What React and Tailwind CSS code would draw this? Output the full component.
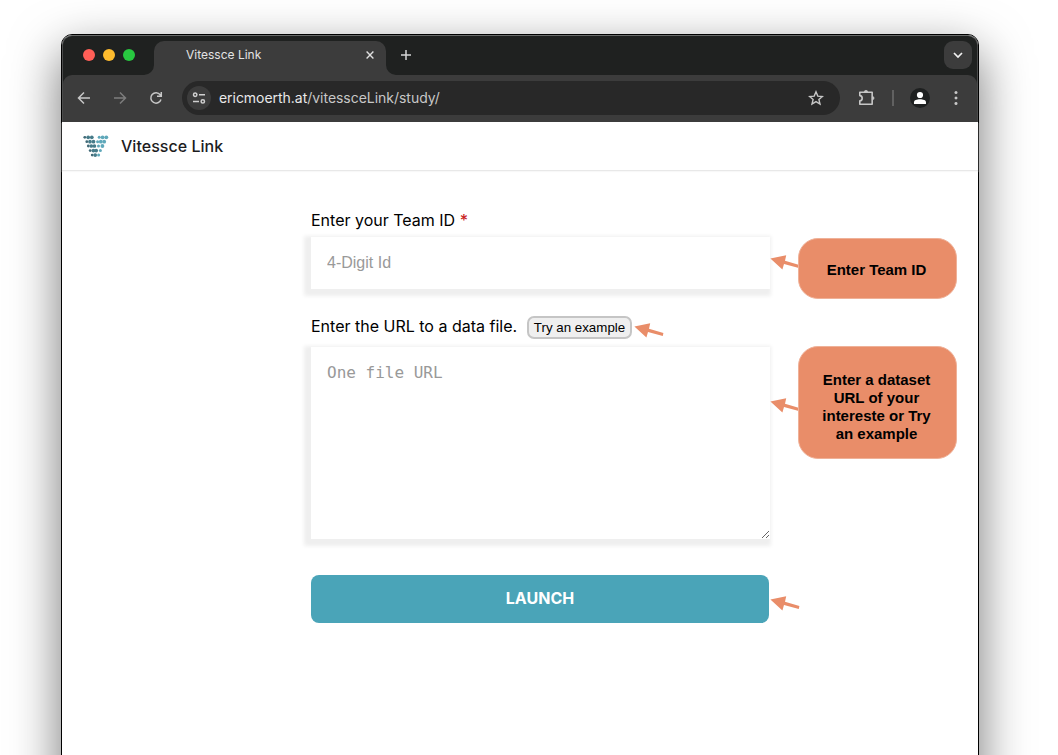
import React from "react";

const ROWS = [
  { y: 13.8, dark: [12.8, 16.2, 19.8], light: [27.2, 30.6, 34.3] },
  { y: 18.2, dark: [14.8, 18, 21.5], light: [25.6, 28.8, 32.2] },
  { y: 22.5, dark: [16.3, 19.3, 22.4], light: [26.5, 30.4] },
  { y: 27.1, dark: [18.2, 21.4, 24.2], light: [28.4] },
  { y: 31.6, dark: [20.2, 23.2], light: [26.6] },
];

function Logo() {
  return (
    <svg className="h-[26px] w-[28px] shrink-0" viewBox="10 9.5 28 26">
      {ROWS.map((r) => (
        <g key={r.y}>
          {r.dark.map((x, i) => (
            <circle key={x} cx={x} cy={r.y} r={i === 0 ? 1.4 : 1.85} fill={i === 0 ? "#416a77" : "#467b89"} />
          ))}
          {r.light.map((x, i) => (
            <circle key={x} cx={x} cy={r.y} r={i === 0 ? 1.5 : 1.9} fill="#5fa8ba" />
          ))}
        </g>
      ))}
    </svg>
  );
}

function Arrow({ className }) {
  return (
    <svg className={"absolute h-5 w-8 " + className} viewBox="0 0 32 20" fill="#e98d69">
      <path d="M0.4 5.6 16.2 2.2 15 7.8 29.4 12 28.8 15.1 14 11 12.4 16.6Z" />
    </svg>
  );
}

function Tab() {
  return (
    <div className="relative mt-[5px] flex h-[34px] w-[232px] items-start rounded-t-[10px] bg-[#3c3c3c] pl-8 pr-[10px] pt-[5px]">
      <svg className="absolute -left-[10px] bottom-0 size-[10px]" viewBox="0 0 10 10"><path d="M10 0V10H0A10 10 0 0 0 10 0" fill="#3c3c3c" /></svg>
      <svg className="absolute -right-[10px] bottom-0 size-[10px]" viewBox="0 0 10 10"><path d="M0 0V10H10A10 10 0 0 1 0 0" fill="#3c3c3c" /></svg>
      <span className="grow text-[12px] leading-[18px] text-[#e3e3e3]">Vitessce Link</span>
      <svg className="mt-[5px] mr-[2px] size-[8px]" viewBox="0 0 8 8" stroke="#dedede" strokeWidth="1.4"><path d="M.6.6 7.4 7.4M7.4.6.6 7.4" /></svg>
    </div>
  );
}

function Toolbar() {
  return (
    <div className="flex h-[47px] items-center rounded-t-[9px] bg-[#3c3c3c] pb-[2px] pl-[13px] pr-[13px]">
      <svg className="size-4" viewBox="0 0 16 16" fill="none" stroke="#c7c7c7" strokeWidth="1.5"><path d="M14 8H3M8 2.5 2.5 8 8 13.5" /></svg>
      <svg className="ml-5 size-4" viewBox="0 0 16 16" fill="none" stroke="#7d7d7d" strokeWidth="1.5"><path d="M2 8H13M8 2.5 13.5 8 8 13.5" /></svg>
      <svg className="ml-5 size-4" viewBox="0 0 16 16" fill="none" stroke="#c7c7c7" strokeWidth="1.5"><path d="M13 9.5A5.2 5.2 0 1 1 12.2 4.8L13.3 6M13.3 2V6.2H9" /></svg>
      <div className="ml-[18px] flex h-[34px] w-[659px] items-center rounded-full bg-[#282828] pl-[5px] pr-4">
        <div className="flex size-6 items-center justify-center rounded-full bg-[#3c3c3c]">
          <svg className="size-[14px]" viewBox="0 0 14 14" fill="none" stroke="#d0d0d0" strokeWidth="1.5"><circle cx="3.2" cy="3.8" r="1.7" /><path d="M7 3.8H13M1 10.4H7" /><circle cx="10.8" cy="10.4" r="1.7" /></svg>
        </div>
        <div className="ml-2 grow whitespace-nowrap text-[14px] leading-5 tracking-[-0.03px] text-[#c7c7c7]"><span className="text-[#e9e9e9]">ericmoerth.at</span>/vitessceLink/study/</div>
        <svg className="size-4" viewBox="0 0 16 16" fill="none" stroke="#c7c7c7" strokeWidth="1.4"><path d="M8 1.8 9.8 6.1 14.4 6.5 10.9 9.5 12 14 8 11.6 4 14 5.1 9.5 1.6 6.5 6.2 6.1Z" /></svg>
      </div>
      <svg className="ml-[18px] size-[18px]" viewBox="0 0 18 18" fill="none" stroke="#c7c7c7" strokeWidth="1.6"><path d="M1.8 3.2H14.2V15.3H1.8V11.9C5 11.7 5 6.8 1.8 6.6Z" strokeLinejoin="round" /><path d="M6.3 3A1.7 1.7 0 0 1 9.7 3ZM14.4 7.4A1.7 1.7 0 0 1 14.4 10.8Z" fill="#c7c7c7" stroke="#c7c7c7" strokeWidth="0.6" /></svg>
      <div className="ml-4 h-4 w-[2px] bg-[#616161]" />
      <svg className="ml-4 size-5" viewBox="0 0 20 20"><circle cx="10" cy="10" r="10" fill="#1e2020" /><circle cx="10" cy="7" r="3.1" fill="white" /><path d="M4 16V14.2C4 12.2 7 11.3 10 11.3S16 12.2 16 14.2V16Z" fill="white" /></svg>
      <svg className="ml-[18px] size-4" viewBox="0 0 16 16" fill="#c7c7c7"><circle cx="8" cy="2.5" r="1.5" /><circle cx="8" cy="8" r="1.5" /><circle cx="8" cy="13.5" r="1.5" /></svg>
    </div>
  );
}

export default function App() {
  return (
    <div className="h-[755px] w-[1058px] overflow-hidden bg-white pl-[61px] pt-[34px] font-['Inter',sans-serif]">
      <div className="relative flex h-[850px] w-[918px] flex-col rounded-[11px] border border-black bg-white shadow-[0_18px_50px_rgba(0,0,0,0.55)]">
        <header className="flex h-[87px] flex-col rounded-t-[10px] border-x border-t border-[#686a69] border-x-[#4b4c4c] bg-[#1f2120]">
          <div className="flex h-[39px] items-start pl-5 pr-[5px]">
            <div className="mt-[13px] flex gap-2">
              <i className="size-3 rounded-full bg-[#ff5f57]" />
              <i className="size-3 rounded-full bg-[#febc2e]" />
              <i className="size-3 rounded-full bg-[#28c840]" />
            </div>
            <div className="ml-[19px]"><Tab /></div>
            <svg className="ml-[15px] mt-[14px] size-[10px]" viewBox="0 0 10 10" stroke="#d5d5d5" strokeWidth="1.5"><path d="M5 0V10M0 5H10" /></svg>
            <div className="ml-auto mt-[5px] flex size-7 items-center justify-center rounded-[9px] bg-[#3c3c3c]">
              <svg className="size-[10px]" viewBox="0 0 10 10" fill="none" stroke="#f1f1f1" strokeWidth="1.7"><path d="M1 3 5 7 9 3" /></svg>
            </div>
          </div>
          <Toolbar />
        </header>
        <nav className="flex h-[49px] items-center border-b border-[#e8e8e8] pl-5 shadow-[0_1px_1px_#f8f8f8]">
          <Logo />
          <span className="ml-[11px] text-[16px] font-[450] tracking-[0.02px] text-[#1c1c1e]">Vitessce Link</span>
        </nav>
        <main className="ml-[249px] flex w-[459px] flex-col pt-[37px] text-[16px] leading-6 text-black">
          <label className="whitespace-nowrap">Enter your Team ID <span className="font-medium text-[#c91f1f]">*</span></label>
          <input placeholder="4-Digit Id" className="mt-[5px] h-[52px] w-full bg-white px-4 font-['Liberation_Sans',sans-serif] text-[16px] shadow-[-3px_3px_4px_4px_#efefef] outline-none placeholder:text-[#999999]" />
          <div className="mt-[26px] flex h-6 items-center">
            <label className="w-[216px] whitespace-nowrap pb-[2px]">Enter the URL to a data file.</label>
            <button className="h-[23px] w-[105px] whitespace-nowrap rounded-[7px] border-2 border-[#c5c5c5] bg-[#efefef] pt-px font-['Liberation_Sans',sans-serif] text-[13.33px] leading-[18px]">Try an example</button>
          </div>
          <textarea placeholder="One file URL" className="mt-[8px] h-[192px] w-full resize bg-white px-4 pt-[14px] font-['DejaVu_Sans_Mono',monospace] text-[16px] leading-6 shadow-[-3px_3px_4px_4px_#efefef] outline-none placeholder:text-[#999999]" />
          <button className="mt-9 h-12 w-[458px] rounded-lg bg-[#4aa4b8] pb-[2px] text-[16px] font-bold text-white">LAUNCH</button>
        </main>
        <Arrow className="left-[708px] top-[218px]" />
        <Arrow className="left-[572px] top-[286px]" />
        <Arrow className="left-[708px] top-[361px]" />
        <Arrow className="left-[708px] top-[559px]" />
        <div className="absolute left-[736px] top-[203px] flex h-[61px] w-[159px] items-center justify-center rounded-[20px] border border-[#efb198] bg-[#e98d69] pr-[2px] pt-[2px] font-['Liberation_Sans',sans-serif] text-[15px] font-bold leading-[18px]">Enter Team ID</div>
        <div className="absolute left-[736px] top-[311px] flex h-[113px] w-[159px] items-center justify-center rounded-[20px] border border-[#efb198] bg-[#e98d69] pr-[2px] pt-[8px] text-center font-['Liberation_Sans',sans-serif] text-[15px] font-bold leading-[18px]">Enter a dataset<br />URL of your<br />intereste or Try<br />an example</div>
      </div>
    </div>
  );
}
